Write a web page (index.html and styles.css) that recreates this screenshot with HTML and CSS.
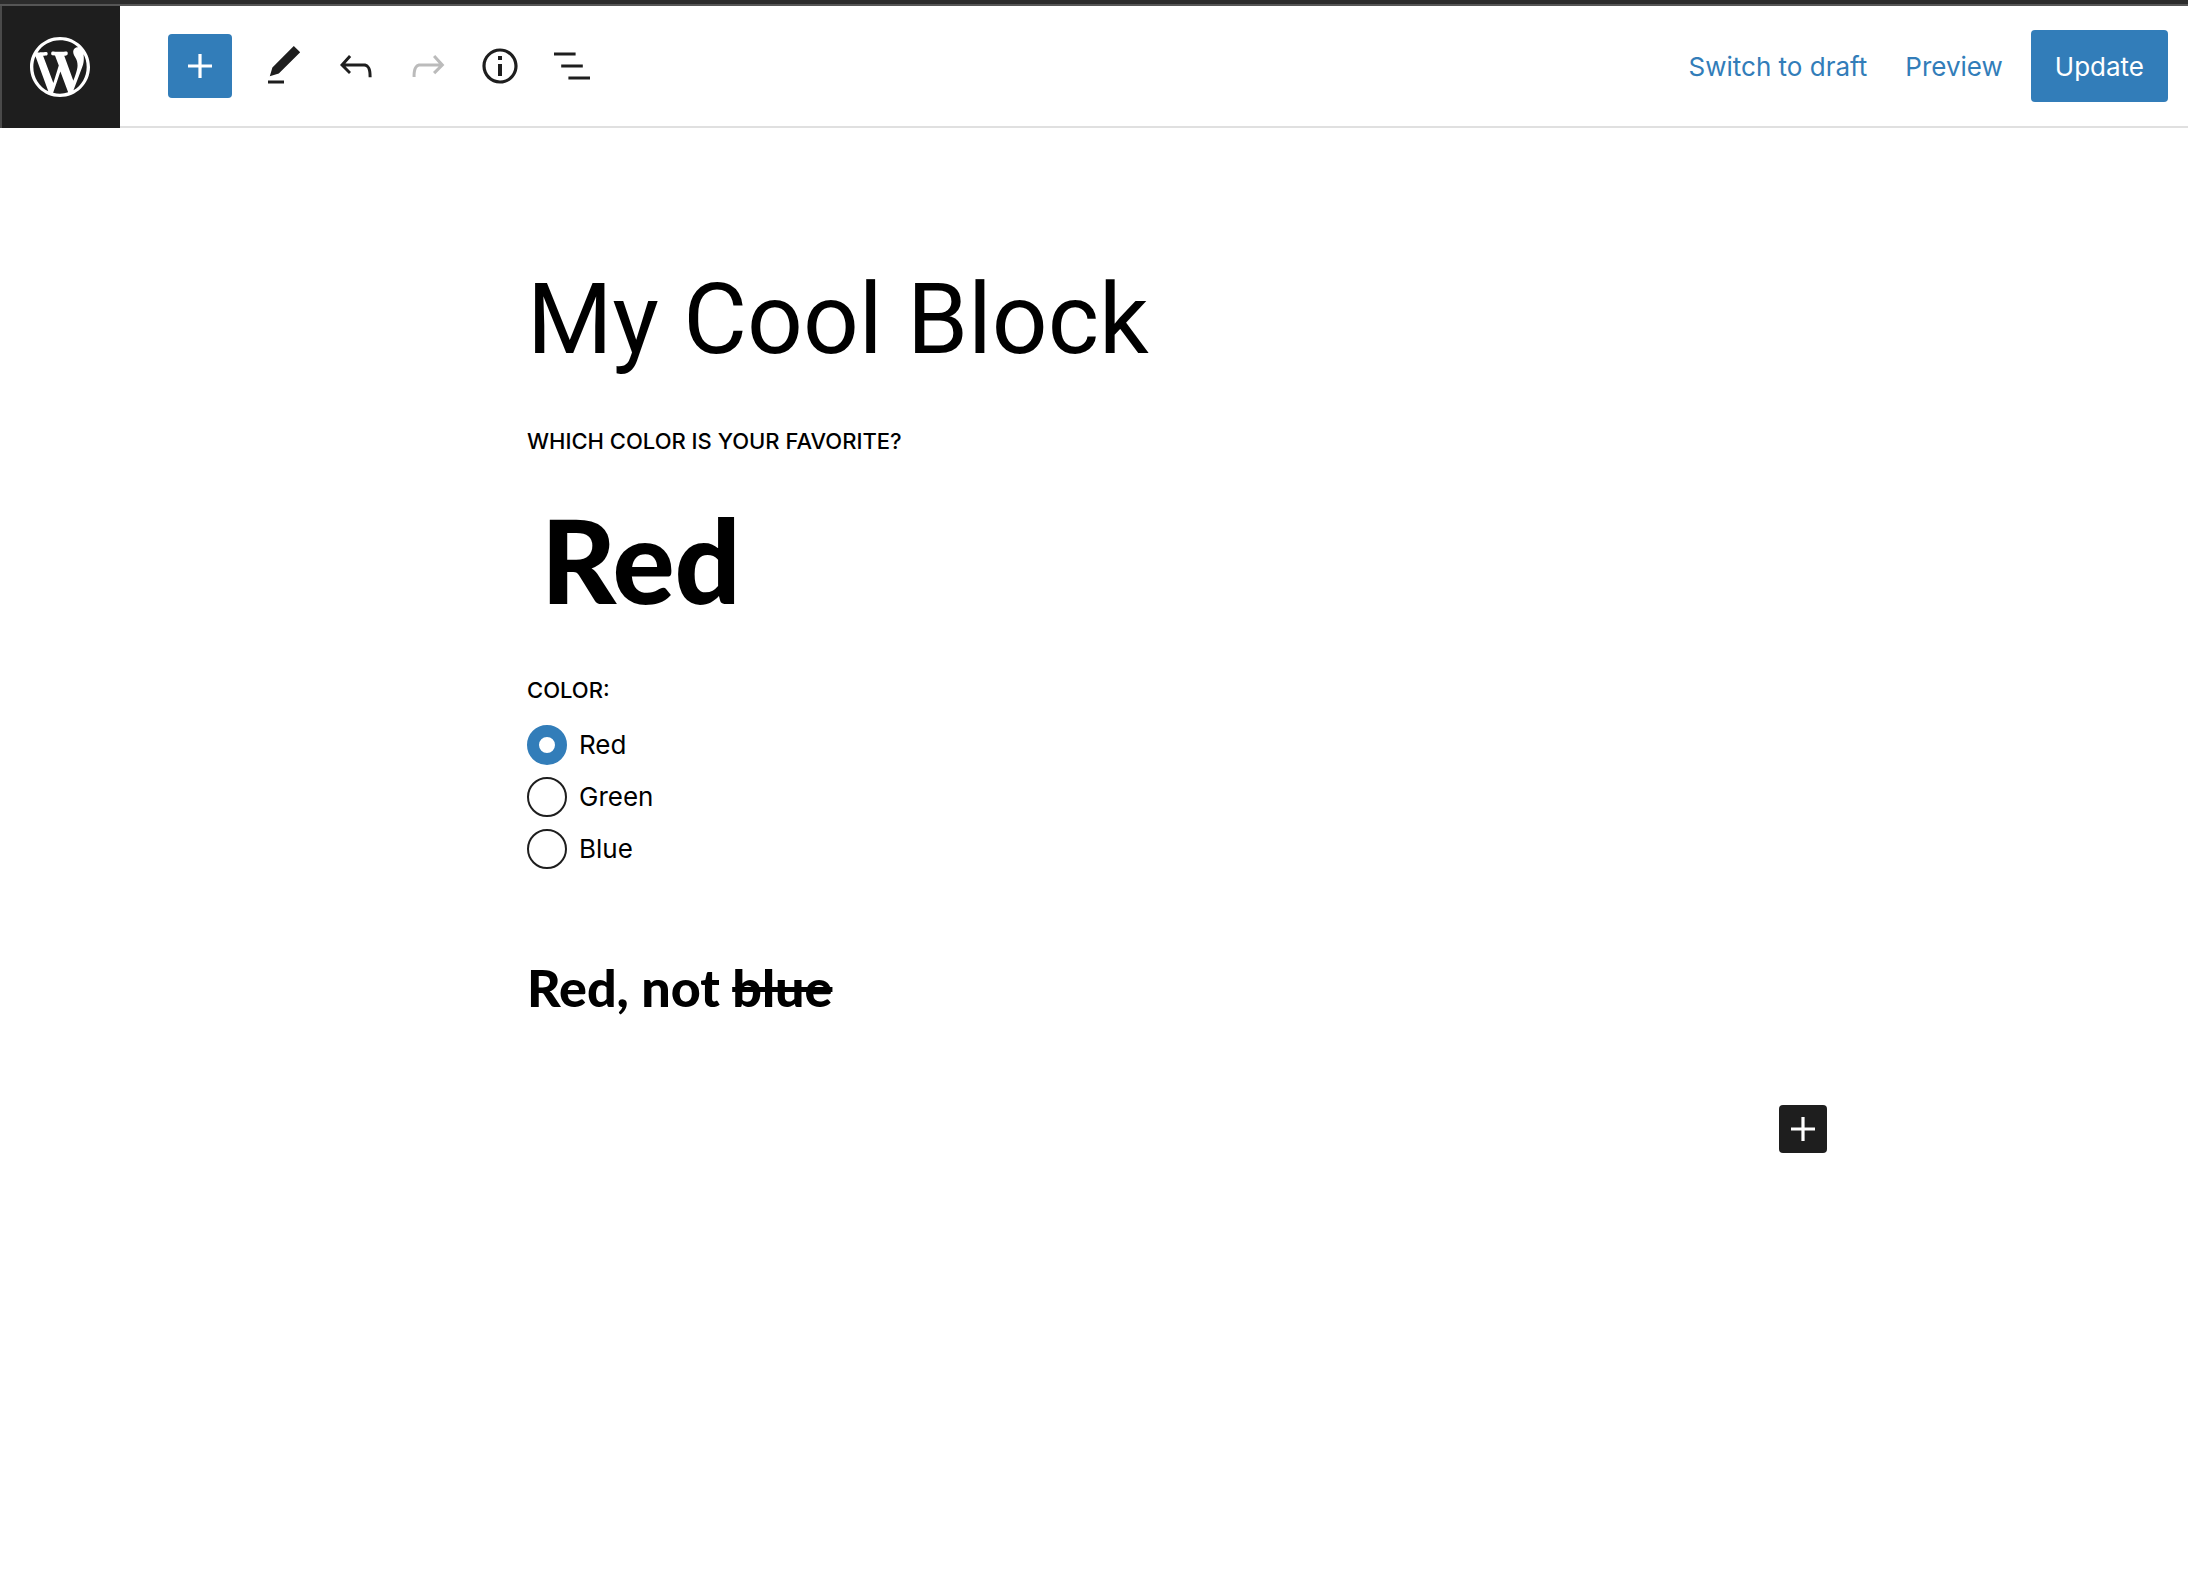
FILE: index.html
```html
<!DOCTYPE html>
<html lang="en">
<head>
<meta charset="utf-8">
<meta name="viewport" content="width=device-width, initial-scale=1">
<title>Edit Post</title>
<link rel="stylesheet" href="styles.css">
</head>
<body>
<div class="window-edge"></div>
<header class="header">
  <a class="site-link" href="#" aria-label="View posts">
    <svg class="site-logo" viewBox="-2 -2 24 24" aria-hidden="true"><path d="M20 10c0-5.51-4.49-10-10-10C4.48 0 0 4.49 0 10c0 5.52 4.48 10 10 10 5.51 0 10-4.48 10-10zM7.78 15.37L4.37 6.22c.55-.02 1.17-.08 1.17-.08.5-.06.44-1.13-.06-1.11 0 0-1.45.11-2.37.11-.18 0-.37 0-.58-.01C4.12 2.69 6.87 1.11 10 1.11c2.33 0 4.45.87 6.05 2.34-.68-.11-1.65.39-1.65 1.58 0 .74.45 1.36.9 2.1.35.61.55 1.36.55 2.46 0 1.49-1.4 5-1.4 5l-3.03-8.37c.54-.02.82-.17.82-.17.5-.05.44-1.25-.06-1.22 0 0-1.44.12-2.38.12-.87 0-2.33-.12-2.33-.12-.5-.03-.56 1.2-.06 1.22l.92.08 1.26 3.41zM17.41 10c.24-.64.74-1.87.43-4.25.7 1.29 1.05 2.71 1.05 4.25 0 3.29-1.73 6.24-4.4 7.78.97-2.59 1.94-5.2 2.92-7.78zM6.1 18.09C3.12 16.65 1.11 13.53 1.11 10c0-1.3.23-2.48.72-3.59C3.25 10.3 4.67 14.2 6.1 18.09zm4.03-6.63l2.58 6.98c-.86.29-1.76.45-2.71.45-.79 0-1.57-.11-2.29-.33.81-2.38 1.62-4.74 2.42-7.1z"/></svg>
  </a>
  <div class="header-bar">
    <div class="tools">
      <button class="tool tool-primary" type="button" aria-label="Add block"><svg class="icon" viewBox="0 0 24 24"><path d="M18 11.2h-5.2V6h-1.6v5.2H6v1.6h5.2V18h1.6v-5.2H18z"/></svg></button>
      <button class="tool" type="button" aria-label="Tools"><svg class="icon" viewBox="0 0 24 24"><path d="M20.1 5.1L16.9 2 6.2 12.7l-1.3 4.4 4.5-1.3L20.1 5.1zM4 20.8h8v-1.5H4v1.5z"/></svg></button>
      <button class="tool" type="button" aria-label="Undo"><svg class="icon" viewBox="0 0 24 24"><path d="M18.3 11.7c-.6-.6-1.4-.9-2.3-.9H6.7l2.9-3.3-1.1-1-4.5 5L8.5 16l1-1-2.7-2.7H16c.5 0 .9.2 1.3.5 1 1 1 3.4 1 4.5v.3h1.5v-.2c0-1.5 0-4.3-1.5-5.7z"/></svg></button>
      <button class="tool" type="button" aria-label="Redo" disabled><svg class="icon" viewBox="0 0 24 24"><path d="M15.6 6.5l-1.1 1 2.9 3.3H8c-.9 0-1.7.3-2.3.9-1.4 1.5-1.4 4.2-1.4 5.6v.2h1.5v-.3c0-1.1 0-3.5 1-4.5.3-.3.7-.5 1.3-.5h9.2L14.5 15l1.1 1.1 4.6-4.6-4.6-5z"/></svg></button>
      <button class="tool" type="button" aria-label="Details"><svg class="icon" viewBox="0 0 24 24"><path d="M12 3.2c-4.8 0-8.8 3.9-8.8 8.8 0 4.8 3.9 8.8 8.8 8.8 4.8 0 8.8-3.9 8.8-8.8 0-4.8-4-8.8-8.8-8.8zm0 16c-4 0-7.2-3.3-7.2-7.2C4.8 8 8 4.8 12 4.8s7.2 3.3 7.2 7.2c0 4-3.2 7.2-7.2 7.2zM11 17h2v-6h-2v6zm0-8h2V7h-2v2z"/></svg></button>
      <button class="tool" type="button" aria-label="Outline"><svg class="icon" viewBox="0 0 24 24"><path d="M13.8 5.2H3v1.5h10.8V5.2zm-3.6 12v1.5H21v-1.5H10.2zm7.2-6H6.6v1.5h10.8v-1.5z"/></svg></button>
    </div>
    <div class="actions">
      <button class="text-button" type="button">Switch to draft</button>
      <button class="text-button" type="button">Preview</button>
      <button class="update-button" type="button">Update</button>
    </div>
  </div>
</header>
<main class="editor">
  <h1 class="post-title">My Cool Block</h1>
  <h2 class="field-label">Which color is your favorite?</h2>
  <p class="answer">Red</p>
  <fieldset class="choices">
    <legend class="field-label">Color:</legend>
    <label class="choice"><input class="radio" type="radio" name="color" checked>Red</label>
    <label class="choice"><input class="radio" type="radio" name="color">Green</label>
    <label class="choice"><input class="radio" type="radio" name="color">Blue</label>
  </fieldset>
  <p class="summary">Red, not <s>blue</s></p>
  <button class="appender" type="button" aria-label="Add block"><svg class="icon" viewBox="0 0 24 24"><path d="M18 11.2h-5.2V6h-1.6v5.2H6v1.6h5.2V18h1.6v-5.2H18z"/></svg></button>
</main>
</body>
</html>
```
FILE: styles.css
```css
* { box-sizing: border-box; }

body {
  margin: 0;
  background: #fff;
  color: #000;
  font: 26px/36px Inter, "Liberation Sans", sans-serif;
}

button {
  margin: 0;
  padding: 0;
  border: 0;
  background: none;
  color: inherit;
  font: inherit;
}

.window-edge {
  height: 6px;
  background: #2c2c2c;
  border-bottom: 2px solid #565656;
}

.header {
  display: flex;
  height: 122px;
}

.site-link {
  display: flex;
  align-items: center;
  justify-content: center;
  width: 120px;
  padding-right: 2px;
  background: #1e1e1e;
  border-left: 2px solid #4a4a4a;
}

.site-logo {
  width: 72px;
  height: 72px;
  fill: #fff;
}

.header-bar {
  display: flex;
  flex: 1;
  align-items: center;
  justify-content: space-between;
  padding: 0 20px 0 48px;
  border-bottom: 2px solid #e0e0e0;
}

.tools {
  display: flex;
  gap: 8px;
}

.tool {
  display: flex;
  align-items: center;
  justify-content: center;
  width: 64px;
  height: 64px;
  border-radius: 4px;
  color: #1e1e1e;
}

.tool:disabled { color: #bbb; }

.tool-primary {
  margin-right: 12px;
  background: #327db9;
  color: #fff;
}

.icon {
  width: 48px;
  height: 48px;
  fill: currentColor;
}

.actions {
  display: flex;
  align-items: center;
  gap: 20px;
}

.text-button {
  padding: 2px 8px 0 10px;
  color: #327db9;
}

.update-button {
  height: 72px;
  padding: 2px 24px 0;
  border-radius: 4px;
  background: #327db9;
  color: #fff;
}

.editor {
  padding: 132px calc(50% - 733px) 64px calc(50% - 567px);
}

.post-title {
  margin: 0 0 47px;
  font-family: Roboto, Inter, sans-serif;
  font-size: 98px;
  font-weight: 400;
  line-height: 120px;
}

.field-label {
  margin: 0;
  padding: 0;
  font-size: 22px;
  font-weight: 500;
  line-height: 28px;
  text-transform: uppercase;
}

.answer,
.summary {
  margin: 0;
  font-family: Lato, "Open Sans", sans-serif;
  font-weight: 900;
}

.answer {
  margin: 45px 0 56px;
  padding-left: 14px;
  font-size: 116px;
  line-height: 120px;
}

.choices {
  display: flex;
  flex-direction: column;
  align-items: flex-start;
  gap: 12px;
  margin: 0;
  padding: 0;
  border: 0;
}

.choices .field-label { margin-bottom: 21px; }

.choice {
  display: flex;
  align-items: center;
  gap: 12px;
  height: 40px;
}

.radio {
  appearance: none;
  width: 40px;
  height: 40px;
  margin: 0;
  border: 2px solid #1e1e1e;
  border-radius: 50%;
  background: #fff;
}

.radio:checked {
  border: 12px solid #327db9;
}

.summary {
  margin: 86px 0;
  font-size: 52px;
  line-height: 64px;
}

.appender {
  display: flex;
  align-items: center;
  justify-content: center;
  width: 48px;
  height: 48px;
  margin-left: auto;
  border-radius: 4px;
  background: #1e1e1e;
  color: #fff;
}
```
